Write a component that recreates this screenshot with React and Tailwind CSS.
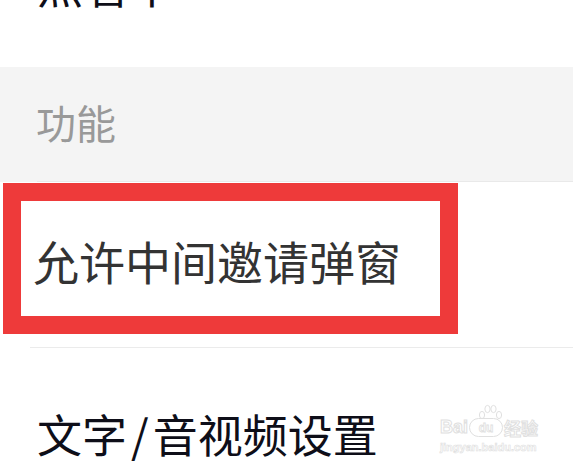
export default function App() {
  const font = { fontFamily: '"Noto Sans CJK SC", "Noto Sans", sans-serif' };
  const lib = { fontFamily: '"Liberation Sans", sans-serif' };
  return (
    <div className="relative w-[573px] h-[468px] overflow-hidden bg-white" style={font}>
      {/* top partially visible item */}
      <div className="h-[67px] overflow-hidden pl-[37px]">
        <div className="mt-[-40px] text-[46px] leading-[46px] text-[#0e0e18]">照看中</div>
      </div>
      {/* section header */}
      <div className="h-[114px] bg-[#f4f4f4] pl-[36px] pt-[35px]">
        <div className="text-[40px] leading-[40px] text-[#999999]">功能</div>
      </div>
      <div className="flex h-px">
        <div className="w-[37px] bg-[#f4f4f4]" />
        <div className="flex-1 bg-[#e9e9e9]" />
      </div>
      {/* highlighted row */}
      <div className="h-[165px] pt-[1px] pl-[3px]">
        <div className="w-[455px] h-[151px] border-[18px] border-[#ee3a3a] pl-[12px] pt-[36px]">
          <div className="text-[46px] leading-[46px] text-[#333333]">允许中间邀请弹窗</div>
        </div>
      </div>
      <div className="flex h-px">
        <div className="w-[30px]" />
        <div className="flex-1 bg-[#ebebeb]" />
      </div>
      {/* next row */}
      <div className="pl-[37px] pt-[63px]">
        <div className="text-[45px] leading-[45px] text-[#0e0e18]">
          文字<span className="mx-[4px]">/</span>音视频设置
        </div>
      </div>
      {/* watermark */}
      <div className="absolute left-[440px] top-[404px] w-[120px] whitespace-nowrap pointer-events-none">
        <div className="relative flex items-end h-[33px]">
          <span className="text-[18px] leading-[18px] font-bold text-white [-webkit-text-stroke:1px_#e0e0e0] mb-[1px]" style={lib}>Bai</span>
          <span className="ml-[1px] flex items-center justify-center w-[34px] h-[19px] rounded-full border border-[#e0e0e0] text-[12px] leading-[12px] text-white [-webkit-text-stroke:0.8px_#e0e0e0] font-bold" style={lib}>
            du
          </span>
          <svg className="absolute left-[38px] top-0" width="25" height="17" viewBox="0 0 25 17" fill="none" stroke="#e0e0e0" strokeWidth="1">
            <ellipse cx="4" cy="11" rx="2.6" ry="3.6" />
            <ellipse cx="9.5" cy="5" rx="2.6" ry="3.6" />
            <ellipse cx="15.5" cy="5" rx="2.6" ry="3.6" />
            <ellipse cx="21" cy="11" rx="2.6" ry="3.6" />
          </svg>
          <span className="ml-[1px] text-[17px] leading-[18px] text-white [-webkit-text-stroke:1px_#e0e0e0] font-bold">经验</span>
        </div>
        <div className="mt-[5px] text-[11px] leading-[11px] font-bold text-white [-webkit-text-stroke:0.6px_#e0e0e0]" style={lib}>jingyan.baidu.com</div>
      </div>
    </div>
  );
}
